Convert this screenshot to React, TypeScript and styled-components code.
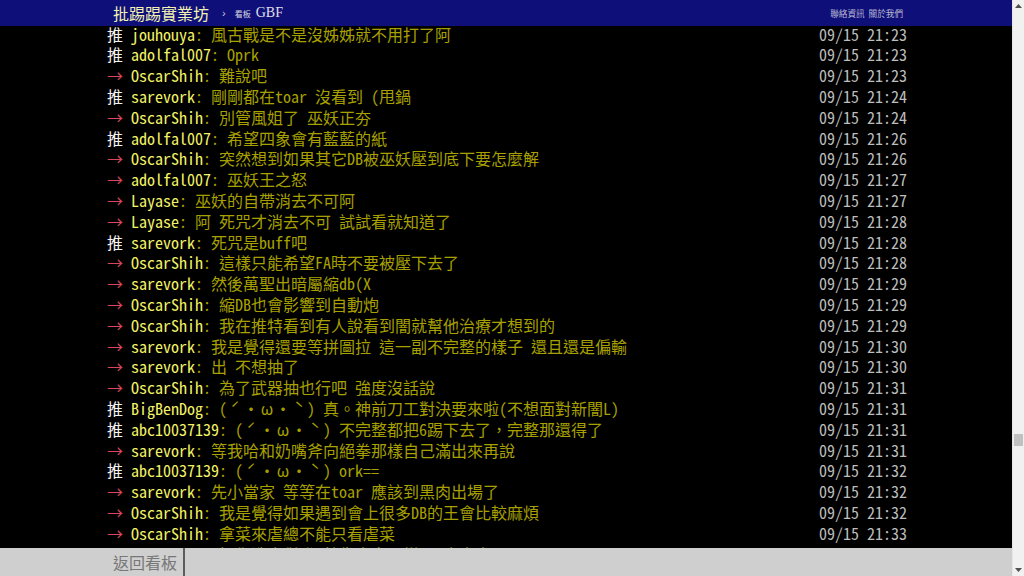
import styled, { createGlobalStyle } from 'styled-components';

// One push (comment) line under the article
interface Push {
  tag: 'push' | 'arrow';
  user: string;
  content: string;
  time: string;
}

const pushes: Push[] = [
  { tag: 'push', user: 'jouhouya', content: '風古戰是不是沒姊姊就不用打了阿', time: '09/15 21:23' },
  { tag: 'push', user: 'adolfal007', content: 'Oprk', time: '09/15 21:23' },
  { tag: 'arrow', user: 'OscarShih', content: '難說吧', time: '09/15 21:23' },
  { tag: 'push', user: 'sarevork', content: '剛剛都在toar 沒看到 (甩鍋', time: '09/15 21:24' },
  { tag: 'arrow', user: 'OscarShih', content: '別管風姐了 巫妖正夯', time: '09/15 21:24' },
  { tag: 'push', user: 'adolfal007', content: '希望四象會有藍藍的紙', time: '09/15 21:26' },
  { tag: 'arrow', user: 'OscarShih', content: '突然想到如果其它DB被巫妖壓到底下要怎麼解', time: '09/15 21:26' },
  { tag: 'arrow', user: 'adolfal007', content: '巫妖王之怒', time: '09/15 21:27' },
  { tag: 'arrow', user: 'Layase', content: '巫妖的自帶消去不可阿', time: '09/15 21:27' },
  { tag: 'arrow', user: 'Layase', content: '阿 死咒才消去不可 試試看就知道了', time: '09/15 21:28' },
  { tag: 'push', user: 'sarevork', content: '死咒是buff吧', time: '09/15 21:28' },
  { tag: 'arrow', user: 'OscarShih', content: '這樣只能希望FA時不要被壓下去了', time: '09/15 21:28' },
  { tag: 'arrow', user: 'sarevork', content: '然後萬聖出暗屬縮db(X', time: '09/15 21:29' },
  { tag: 'arrow', user: 'OscarShih', content: '縮DB也會影響到自動炮', time: '09/15 21:29' },
  { tag: 'arrow', user: 'OscarShih', content: '我在推特看到有人說看到闇就幫他治療才想到的', time: '09/15 21:29' },
  { tag: 'arrow', user: 'sarevork', content: '我是覺得還要等拼圖拉 這一副不完整的樣子 還且還是偏輸', time: '09/15 21:30' },
  { tag: 'arrow', user: 'sarevork', content: '出 不想抽了', time: '09/15 21:30' },
  { tag: 'arrow', user: 'OscarShih', content: '為了武器抽也行吧 強度沒話說', time: '09/15 21:31' },
  { tag: 'push', user: 'BigBenDog', content: '(ˊ・ω・ˋ) 真。神前刀工對決要來啦(不想面對新闇L)', time: '09/15 21:31' },
  { tag: 'push', user: 'abc10037139', content: '(ˊ・ω・ˋ) 不完整都把6踢下去了，完整那還得了', time: '09/15 21:31' },
  { tag: 'arrow', user: 'sarevork', content: '等我哈和奶嘴斧向絕拳那樣自己滿出來再說', time: '09/15 21:31' },
  { tag: 'push', user: 'abc10037139', content: '(ˊ・ω・ˋ) ork==', time: '09/15 21:32' },
  { tag: 'arrow', user: 'sarevork', content: '先小當家 等等在toar 應該到黑肉出場了', time: '09/15 21:32' },
  { tag: 'arrow', user: 'OscarShih', content: '我是覺得如果遇到會上很多DB的王會比較麻煩', time: '09/15 21:32' },
  { tag: 'arrow', user: 'OscarShih', content: '拿菜來虐總不能只看虐菜', time: '09/15 21:33' },
  { tag: 'arrow', user: 'OscarShih', content: '把你洗會併發 就像大宙一樣 只會大大吧DB', time: '09/15 21:33' },
];

// where the page is scrolled to (0..1), drives the scrollbar thumb
const SCROLL_FRACTION = 0.765;

// chars that take two columns on the BBS but are narrow in the font
const WIDE_CHARS = /([ˊˋω])/;

const GlobalStyle = createGlobalStyle`
  html, body {
    margin: 0;
    padding: 0;
    background: #000;
    overflow: hidden;
  }
`;

const Shell = styled.div`
  display: flex;
  width: 1024px;
  height: 576px;
  overflow: hidden;
`;

const Page = styled.div`
  position: relative;
  flex: 1;
  background: #000;
  overflow: hidden;
`;

const Container = styled.div`
  width: 800px;
  margin: 0 auto;
  padding-left: 2px;
`;

/* top bar, fixed over the scrolled content */
const TopBar = styled.div`
  position: absolute;
  top: 0;
  left: 0;
  right: 0;
  height: 26px;
  background: #0f0f7a;
  z-index: 2;
`;

const TopBarInner = styled(Container)`
  display: flex;
  align-items: center;
  height: 100%;
  padding: 0 4px 0 8px;
  box-sizing: border-box;
  width: 802px;
`;

const Logo = styled.a`
  color: #f2f2b0;
  font-family: 'Noto Sans CJK TC', sans-serif;
  font-size: 16px;
  text-decoration: none;
`;

const Chevron = styled.span`
  color: #c8c8d8;
  font-family: 'Liberation Sans', sans-serif;
  font-size: 11px;
  margin: 0 9px 0 13px;
`;

const BoardLabel = styled.span`
  color: #d8d8e0;
  font-family: 'Noto Sans CJK TC', sans-serif;
  font-size: 8px;
  margin-right: 5px;
`;

const BoardName = styled.a`
  color: #e0e0e8;
  font-family: 'Liberation Serif', serif;
  font-size: 14px;
  text-decoration: none;
`;

const TopLinks = styled.div`
  margin-left: auto;
  display: flex;
  gap: 4px;
`;

const TopLink = styled.a`
  color: #b8b8d0;
  font-family: 'Noto Sans CJK TC', sans-serif;
  font-size: 8.6px;
  text-decoration: none;
`;

const PushList = styled(Container)`
  padding-top: 23.6px;
  font-family: 'Noto Sans Mono CJK TC', 'Noto Sans CJK TC', 'Liberation Mono', monospace;
  font-size: 16px;
`;

const Row = styled.div`
  display: flex;
  height: 20.8px;
  line-height: 20.8px;
  white-space: pre;
`;

const Tag = styled.span<{ $arrow: boolean }>`
  color: ${(p) => (p.$arrow ? '#d8475c' : '#f4f4f4')};
`;

const UserId = styled.span`
  color: #f2f266;
`;

const Content = styled.span`
  flex: 1;
  min-width: 0;
  color: #a8a000;
`;

const WideCell = styled.span`
  display: inline-block;
  width: 1em;
  text-align: center;
`;

const Time = styled.span`
  color: #bdbdbd;
`;

/* bottom navigation, fixed over the content */
const BottomNav = styled.div`
  position: absolute;
  left: 0;
  right: 0;
  bottom: 0;
  height: 28px;
  background: #cfcfcf;
  z-index: 2;
`;

const BottomInner = styled(Container)`
  display: flex;
  height: 100%;
`;

const NavButton = styled.a`
  display: flex;
  align-items: center;
  padding: 0 6px;
  border-right: 2px solid #5c5c5c;
  color: #777;
  font-family: 'Noto Sans CJK TC', sans-serif;
  font-size: 16px;
  text-decoration: none;
`;

/* browser scrollbar */
const Scrollbar = styled.div`
  display: flex;
  flex-direction: column;
  width: 12px;
  background: #f1f1f1;
  border-left: 1px solid #e6e6e6;
  box-sizing: border-box;
`;

const ScrollArrow = styled.div`
  height: 12px;
  display: flex;
  align-items: center;
  justify-content: center;
`;

const Track = styled.div`
  position: relative;
  flex: 1;
`;

const Thumb = styled.div`
  position: absolute;
  left: 1px;
  right: 1px;
  height: 12px;
  background: #c1c1c1;
`;

const Triangle = ({ down }: { down?: boolean }) => (
  <svg width="7" height="4" viewBox="0 0 7 4">
    <path d={down ? 'M0 0 H7 L3.5 4 Z' : 'M0 4 H7 L3.5 0 Z'} fill="#505050" />
  </svg>
);

// split text so double-width BBS chars get a full cell
function renderBbsText(text: string) {
  return text.split(WIDE_CHARS).map((part, i) =>
    WIDE_CHARS.test(part) ? <WideCell key={i}>{part}</WideCell> : part
  );
}

export default function App() {
  return (
    <>
      <GlobalStyle />
      <Shell>
        <Page>
          <TopBar>
            <TopBarInner>
              <Logo>批踢踢實業坊</Logo>
              <Chevron>›</Chevron>
              <BoardLabel>看板</BoardLabel>
              <BoardName>GBF</BoardName>
              <TopLinks>
                <TopLink>聯絡資訊</TopLink>
                <TopLink>關於我們</TopLink>
              </TopLinks>
            </TopBarInner>
          </TopBar>

          <PushList>
            {pushes.map((p, i) => (
              <Row key={i}>
                <Tag $arrow={p.tag === 'arrow'}>{p.tag === 'arrow' ? '→ ' : '推 '}</Tag>
                <UserId>{p.user}</UserId>
                <Content>: {renderBbsText(p.content)}</Content>
                <Time>{p.time}</Time>
              </Row>
            ))}
          </PushList>

          <BottomNav>
            <BottomInner>
              <NavButton>返回看板</NavButton>
            </BottomInner>
          </BottomNav>
        </Page>

        <Scrollbar>
          <ScrollArrow>
            <Triangle />
          </ScrollArrow>
          <Track>
            <Thumb style={{ top: `${SCROLL_FRACTION * 100}%` }} />
          </Track>
          <ScrollArrow>
            <Triangle down />
          </ScrollArrow>
        </Scrollbar>
      </Shell>
    </>
  );
}
